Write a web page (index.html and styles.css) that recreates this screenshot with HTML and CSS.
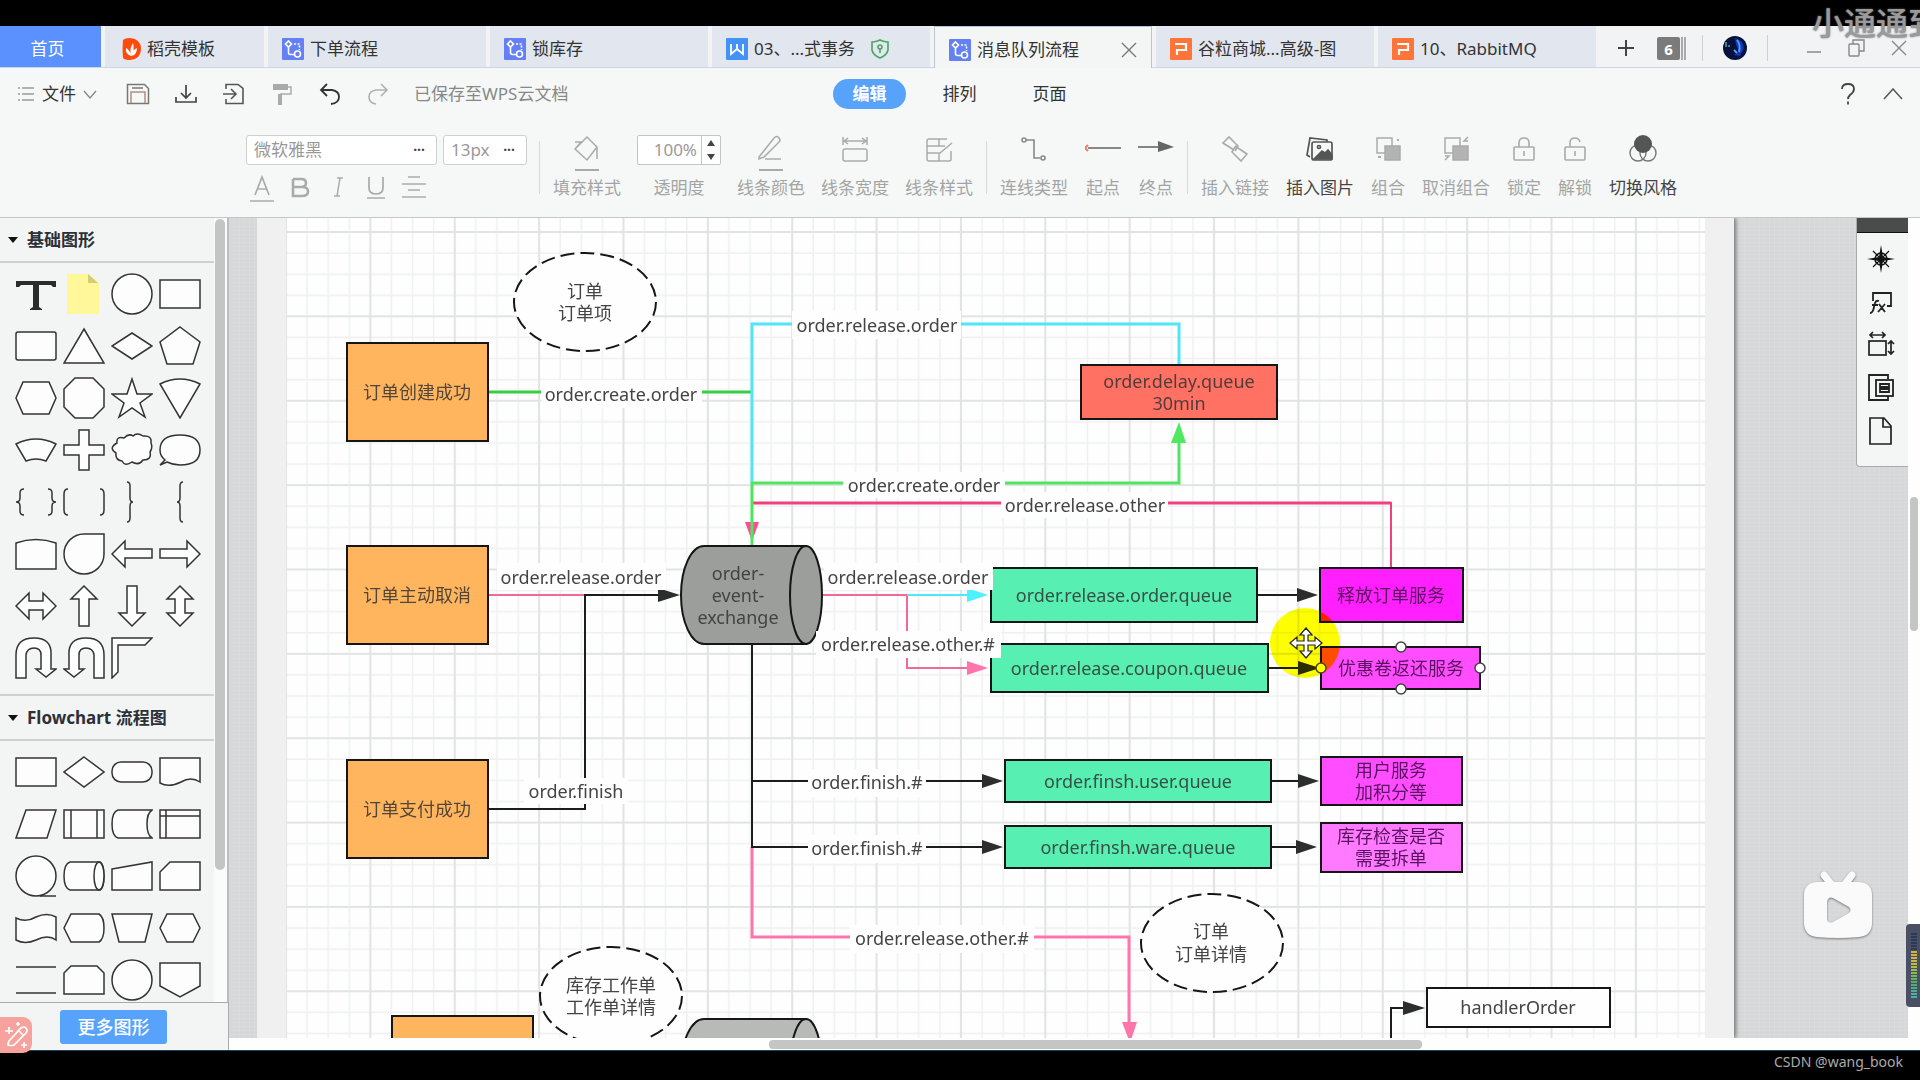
FILE: index.html
```html
<!DOCTYPE html>
<html lang="zh-CN">
<head>
<meta charset="utf-8">
<title>消息队列流程</title>
<link rel="stylesheet" href="styles.css">
</head>
<body>
<svg class="defs" width="0" height="0" aria-hidden="true">
  <defs>
    <symbol id="flow" viewBox="0 0 22 22"><rect width="22" height="22" rx="1" fill="#6580f2"/><g fill="none" stroke="#fff" stroke-width="1.6"><path d="M6.500 3 9.500 6 6.500 9 3.500 6ZM6.500 9v5.500q0 2 2 2h4"/><circle cx="15.500" cy="16" r="3"/><path d="M12 6h5.500v6" stroke-dasharray="2 1.500"/></g></symbol>
    <symbol id="ppt" viewBox="0 0 22 22"><rect width="22" height="22" rx="1" fill="#ff7438"/><path d="M5 6h11v6H7v5" fill="none" stroke="#fff" stroke-width="2.200"/></symbol>
  </defs>
</svg>

<div class="top-band"></div>
<div class="app">
  <nav class="tabs">
    <button class="tab home">首页</button>
    <button class="tab docer"><svg width="19" height="22" viewBox="0 0 19 22"><path d="M1 2q2-2 7-2 11 1 11 11T8 22q-5 0-7-2-1-9 0-18Z" fill="#ff4a0c"/><path d="M9 18q-2-7 2-13 2 7-2 13-6-2-5-8 4 2 5 8 1-6 6-8 0 7-6 8" fill="#fff"/></svg>稻壳模板</button>
    <button class="tab"><svg width="22" height="22"><use href="#flow"/></svg>下单流程</button>
    <button class="tab"><svg width="22" height="22"><use href="#flow"/></svg>锁库存</button>
    <button class="tab"><svg width="22" height="22" viewBox="0 0 22 22"><rect width="22" height="22" rx="1" fill="#4592f7"/><path d="M5 6v10l6-5 6 5V6M11 6v5" fill="none" stroke="#fff" stroke-width="1.800"/></svg>03、...式事务<svg class="shield" width="18" height="20" viewBox="0 0 18 20" fill="none" stroke="#45a85c" stroke-width="1.600"><path d="M9 1q4 2 8 2v8q-1 5-8 8-7-3-8-8V3q4 0 8-2Z"/><circle cx="9" cy="8" r="2"/><path d="M9 10v4"/></svg></button>
    <button class="tab active"><svg width="22" height="22"><use href="#flow"/></svg>消息队列流程<svg class="close" width="16" height="16" viewBox="0 0 16 16"><path d="M1 1 15 15M15 1 1 15" stroke="#777" stroke-width="1.400"/></svg></button>
    <button class="tab"><svg width="22" height="22"><use href="#ppt"/></svg>谷粒商城...高级-图</button>
    <button class="tab"><svg width="22" height="22"><use href="#ppt"/></svg>10、RabbitMQ</button>
    <div class="window-tools">
      <button aria-label="新建"><svg width="18" height="18"><path d="M9 1v16M1 9h16" stroke="#444" stroke-width="2"/></svg></button>
      <span class="stack"><b>6</b><i></i><i></i></span>
      <span class="bar"></span>
      <svg class="avatar" width="24" height="24" viewBox="0 0 24 24"><circle cx="12" cy="12" r="12" fill="#06123c"/><path d="M12 2q8 2 9 10l-4 8-6-1 5-4-3-6Z" fill="#1236b8"/><path d="M14 4q4 5 2 12M11 14l3 3" stroke="#4f9bf5" fill="none" stroke-width="2"/><path d="M3 6v5M5 10h2" stroke="#7cf0cf" stroke-width="1"/></svg>
      <span class="bar"></span>
      <button class="win-min" aria-label="最小化"><svg width="16" height="16"><path d="M1 9h14" stroke="#888" stroke-width="1.500"/></svg></button>
      <button class="win-btn" aria-label="还原"><svg width="18" height="18" fill="none" stroke="#888" stroke-width="1.400"><rect x="1" y="5" width="10" height="12" rx="1"/><path d="M5 5V1h11v11h-5"/></svg></button>
      <button class="win-btn" aria-label="关闭"><svg width="16" height="16"><path d="M1 1 15 15M15 1 1 15" stroke="#888" stroke-width="1.400"/></svg></button>
    </div>
  </nav>

  <header class="header">
    <div class="quick">
      <button class="file"><svg width="18" height="16" stroke="#999" stroke-width="1.400"><path d="M5 2h12M5 8h12M5 14h12M1 2h2M1 8h2M1 14h2"/></svg>文件<svg width="14" height="9" fill="none" stroke="#888" stroke-width="1.300"><path d="M1 1l6 7 6-7"/></svg></button>
      <button class="ic" aria-label="保存"><svg width="24" height="22" fill="none" stroke="#777" stroke-width="1.500"><path d="M1.500 1.500h17l4 4v15h-21Z"/><path d="M5 20V9h14v11" stroke="#b09083"/><path d="M6 5h11"/></svg></button>
      <button class="ic" aria-label="下载"><svg width="22" height="22" fill="none" stroke="#444" stroke-width="1.700"><path d="M11 2v12M6 10l5 5 5-5M1 14v5h20v-5"/></svg></button>
      <button class="ic" aria-label="导出"><svg width="22" height="22" fill="none" stroke="#555" stroke-width="1.600"><path d="M3 6V1.500h12l5 4v15H3V16M0 11h13M8 6l5 5-5 5"/></svg></button>
      <button class="ic" aria-label="格式刷"><svg width="22" height="22" fill="none" stroke="#aaa"><path d="M2 4h15" stroke-width="6"/><path d="M17 4h3v7H9" stroke-width="1.500"/><path d="M9 11v11" stroke-width="4"/></svg></button>
      <button class="ic" aria-label="撤销"><svg width="22" height="22" fill="none" stroke="#333" stroke-width="1.800"><path d="M8 1 2 7l6 6M2 7h11q7 1 7 7t-8 7"/></svg></button>
      <button class="ic" aria-label="重做"><svg width="22" height="22" fill="none" stroke="#b0b0b0" stroke-width="1.600"><path d="M14 1l6 6-6 6M20 7H9q-7 1-7 7t7 7"/></svg></button>
      <span class="saved">已保存至WPS云文档</span>
    </div>
    <div class="modes">
      <button class="mode on">编辑</button>
      <button class="mode">排列</button>
      <button class="mode">页面</button>
    </div>
    <div class="help">
      <button aria-label="帮助"><svg width="16" height="22" fill="none" stroke="#444" stroke-width="1.800"><path d="M2 6q0-5 6-5t6 5q0 3-4 6-2 2-2 4M8 18.500v3"/></svg></button>
      <button aria-label="收起"><svg width="20" height="12" fill="none" stroke="#555" stroke-width="1.500"><path d="M1 11l9-10 9 10"/></svg></button>
    </div>
  </header>

  <div class="ribbon">
    <div class="fonts">
      <div class="row">
        <label class="pick wide"><select aria-label="字体"><option>微软雅黑</option></select><span>···</span></label>
        <label class="pick"><select aria-label="字号"><option>13px</option></select><span>···</span></label>
      </div>
      <div class="row styles">
        <button aria-label="字体颜色"><svg width="24" height="28" fill="none" stroke="#aaa" stroke-width="1.700"><path d="M5 20 12 2l7 18M7.500 14h9M0 26h24"/></svg></button>
        <button aria-label="加粗"><svg width="24" height="28" fill="none" stroke="#aaa" stroke-width="2.600"><path d="M5 4h8q5 0 5 4t-5 4H5V4v17h9q6 0 6-4.500T14 12"/></svg></button>
        <button aria-label="斜体"><svg width="24" height="28" fill="none" stroke="#aaa" stroke-width="1.500"><path d="M11 3h6M8 21h6M14 3l-3 18"/></svg></button>
        <button aria-label="下划线"><svg width="24" height="28" fill="none" stroke="#aaa" stroke-width="1.700"><path d="M5 2v11q0 6 7 6t7-6V2M3 23h18"/></svg></button>
        <button aria-label="对齐"><svg width="24" height="28" fill="none" stroke="#aaa" stroke-width="1.600"><path d="M6 2h12M0 9h24M6 15h12M0 22h24"/></svg></button>
      </div>
    </div>
    <span class="sep"></span>
    <div class="group">
      <button class="tool"><svg width="28" height="36" fill="none" stroke="#aaa" stroke-width="1.500"><path d="M2 14 14 2l10 10-10 13L2 14Zm0 0 6-7M24 12v12M2 7h8"/><path d="M2 35h24" stroke-width="2"/></svg>填充样式</button>
      <div class="tool opacity"><span class="spin"><input id="op" type="text" value="100%"><span><button aria-label="增加"><svg width="10" height="6"><path d="M1 6l4-6 4 6Z" fill="#444"/></svg></button><button aria-label="减少"><svg width="10" height="6"><path d="M1 0l4 6 4-6Z" fill="#444"/></svg></button></span></span><label for="op">透明度</label></div>
      <button class="tool"><svg width="28" height="36" fill="none" stroke="#aaa" stroke-width="1.500"><path d="M2 22 17 3q3-3 5 0t0 4L7 22l-5 2ZM8 24h16"/><path d="M2 35h24" stroke-width="2"/></svg>线条颜色</button>
      <button class="tool"><svg width="28" height="36" fill="none" stroke="#aaa" stroke-width="1.500"><rect x="2" y="14" width="24" height="12" rx="2"/><path d="M2 2v8M26 2v8M3 6h22M7 3 3 6l4 3M21 3l4 3-4 3"/></svg>线条宽度</button>
      <button class="tool"><svg width="28" height="36" fill="none" stroke="#aaa" stroke-width="1.500"><path d="M22 4H4q-2 0-2 2v18q0 2 2 2h20q2 0 2-2v-8M2 11h18M2 18h14M14 4v7M14 19v7M15 18 27 8"/></svg>线条样式</button>
    </div>
    <span class="sep"></span>
    <div class="group lines">
      <button class="tool"><svg width="28" height="36" fill="none" stroke="#888" stroke-width="1.600"><circle cx="4" cy="5" r="2"/><path d="M6 5h8v18h6"/><circle cx="23" cy="23" r="2"/></svg>连线类型</button>
      <button class="tool"><svg width="36" height="36"><path d="M3 13h33" stroke="#888" stroke-width="1.800"/><path d="M3 10 0 13l3 3" fill="none" stroke="#f27a6a" stroke-width="2"/></svg>起点</button>
      <button class="tool"><svg width="36" height="36"><path d="M0 12h22" stroke="#777" stroke-width="1.800"/><path d="M20 6l16 6-16 5Z" fill="#666"/></svg>终点</button>
    </div>
    <span class="sep"></span>
    <div class="group links">
      <button class="tool"><svg width="28" height="36" fill="none" stroke="#aaa" stroke-width="1.600"><path d="M13 15 2 8l6-6 9 9-3 5M14 11l12 8-6 7-9-9 3-5"/></svg>插入链接</button>
      <button class="tool dark"><svg width="30" height="36" fill="none" stroke="#555" stroke-width="1.700"><path d="M5 22 2 20 5 3l17 2v2"/><rect x="7" y="7" width="20" height="18" rx="2"/><path d="M9 24l8-8 3 2 3-3 4 5v4Z" fill="#555"/><circle cx="14" cy="12" r="1.500"/></svg>插入图片</button>
      <button class="tool"><svg width="28" height="36" fill="none" stroke="#aaa" stroke-width="1.500"><path d="M11 18H3V3h15v8"/><rect x="11" y="11" width="15" height="14" fill="#b3b3b3"/><path d="M23 5h2M4 22h3" stroke-width="2"/></svg>组合</button>
      <button class="tool"><svg width="28" height="36" fill="none" stroke="#aaa" stroke-width="1.500"><path d="M11 18H3V3h15v8"/><rect x="11" y="11" width="15" height="14" fill="#b3b3b3"/><path d="M26 2l-4 4h4M3 21h4l-4 4"/></svg>取消组合</button>
      <button class="tool"><svg width="24" height="36" fill="none" stroke="#aaa" stroke-width="1.600"><rect x="2" y="12" width="20" height="13" rx="1"/><path d="M7 12V8q0-5 5-5t5 5v4M12 16v5"/></svg>锁定</button>
      <button class="tool"><svg width="24" height="36" fill="none" stroke="#aaa" stroke-width="1.600"><rect x="2" y="12" width="20" height="13" rx="1"/><path d="M7 12V8q0-5 5-5 4 0 5 4M12 16v5"/></svg>解锁</button>
      <button class="tool dark"><svg width="28" height="36" fill="none" stroke="#777" stroke-width="1.400"><circle cx="9" cy="18" r="8"/><circle cx="19" cy="18" r="8"/><circle cx="14" cy="9" r="9" fill="#555" stroke="none"/></svg>切换风格</button>
    </div>
  </div>

  <main class="work">
    <aside class="side">
      <div class="side-body">
        <div class="lists">
          <h2 class="cat"><svg width="10" height="6"><path d="M0 0h10L5 6Z" fill="#111"/></svg>基础图形</h2>
          <div class="shapes">
            <button><svg><path d="M1 8h40v6h-3l-2-2H24v22l3 2v1H15v-1l3-2V12H6l-2 2H1Z" fill="#2b2b2b" stroke="none"/></svg></button>
            <button><svg><path d="M4 1h22l10 9v31H4Z" fill="#fff799" stroke="none"/><path d="M25 1l10 9H25Z" fill="#d4cd78" stroke="none"/></svg></button>
            <button><svg><circle cx="21" cy="21" r="20"/></svg></button>
            <button><svg><rect x="1" y="7" width="40" height="28"/></svg></button>
            <button><svg><rect x="1" y="7" width="40" height="28" rx="2"/></svg></button>
            <button><svg><path d="M21 4 41 38H1Z"/></svg></button>
            <button><svg><path d="M21 8 41 21 21 34 1 21Z"/></svg></button>
            <button><svg><path d="M21 2 41 17 34 39H8L1 17Z"/></svg></button>
            <button><svg><path d="M8 5h26l7 16-7 16H8L1 21Z"/></svg></button>
            <button><svg><path d="M12 1h18l11 11v18L30 41H12L1 30V12Z"/></svg></button>
            <button><svg><path d="M21 2l5 15h15L29 26l5 14-13-9-13 9 5-14L1 17h15Z"/></svg></button>
            <button><svg><path d="M1 7q20-10 40 0L21 41Z"/></svg></button>
            <button><svg><path d="M1 15q20-10 40 0L31 32q-10-4-20 0Z"/></svg></button>
            <button><svg><path d="M16 1h10v15h15v10H26v15H16V26H1V16h15Z"/></svg></button>
            <button><svg><path d="M6 14Q5 7 13 9q5-5 9-2 4-4 10 0 9-1 8 7 2 5-1 9 2 8-7 8-4 6-11 2-7 5-10-1-7-1-6-8-8-5 1-10Z"/></svg></button>
            <button><svg><path d="M6 31Q1 27 1 21 1 6 21 6t20 15-20 15q-7 0-13-3l-7 3Z"/></svg></button>
            <button><svg><path d="M9 8q-4 0-4 4v5q0 4-4 4 4 0 4 4v5q0 4 4 4M33 8q4 0 4 4v5q0 4 4 4-4 0-4 4v5q0 4-4 4" fill="none"/></svg></button>
            <button><svg><path d="M5 8q-4 0-4 5v16q0 5 4 5M37 8q4 0 4 5v16q0 5-4 5" fill="none"/></svg></button>
            <button><svg><path d="M16 1q3 0 3 4v12q0 4 3 4-3 0-3 4v12q0 4-3 4" fill="none"/></svg></button>
            <button><svg><path d="M24 1q-3 0-3 4v12q0 4-3 4 3 0 3 4v12q0 4 3 4" fill="none"/></svg></button>
            <button><svg><path d="M1 10q20-7 40 0v26H1Z"/></svg></button>
            <button><svg><path d="M41 1v20A20 20 0 1 1 21 1Z"/></svg></button>
            <button><svg><path d="M1 21 14 8v8h27v9H14v9Z"/></svg></button>
            <button><svg><path d="M41 21 28 8v8H1v9h27v9Z"/></svg></button>
            <button><svg><path d="M1 21 14 8v8h14V8l13 13-13 13v-9H14v9Z"/></svg></button>
            <button><svg><path d="M21 1 34 14h-8v27H16V14H8Z"/></svg></button>
            <button><svg><path d="M21 41 34 28h-8V1H16v27H8Z"/></svg></button>
            <button><svg><path d="M21 1 34 14h-8v14h8L21 41 8 28h8V14H8Z"/></svg></button>
            <button><svg><path d="M1 41V18Q1 1 19 1t17 17v14h5l-10 8-10-8h5V18q0-7-7-7t-8 7v23Z"/></svg></button>
            <button><svg><path d="M41 41V18Q41 1 23 1T6 18v14H1l10 8 10-8h-5V18q0-7 7-7t8 7v23Z"/></svg></button>
            <button><svg><path d="M1 1h40l-7 7H7v27l-6 6Z"/></svg></button>
          </div>
          <h2 class="cat ruled"><svg width="10" height="6"><path d="M0 0h10L5 6Z" fill="#111"/></svg>Flowchart 流程图</h2>
          <div class="shapes">
            <button><svg><rect x="1" y="7" width="40" height="28"/></svg></button>
            <button><svg><path d="M21 6 41 21 21 36 1 21Z"/></svg></button>
            <button><svg><rect x="1" y="11" width="40" height="20" rx="9"/></svg></button>
            <button><svg><path d="M1 7h40v24q-9-6-19 0-12 6-21 1Z"/></svg></button>
            <button><svg><path d="M11 7h30l-9 28H1Z"/></svg></button>
            <button><svg><path d="M1 7h40v28H1ZM8 7v28M34 7v28"/></svg></button>
            <button><svg><path d="M41 7H7q-6 2-6 14t6 14h34q-5-3-5-14t5-14Z"/></svg></button>
            <button><svg><path d="M1 7h40v28H1ZM7 7v28M1 13h40"/></svg></button>
            <button><svg><circle cx="21" cy="21" r="20"/><path d="M25 41h16"/></svg></button>
            <button><svg><path d="M7 7h30q4 2 4 14t-4 14H7Q1 33 1 21T7 7Z"/><ellipse cx="36" cy="21" rx="5" ry="14"/></svg></button>
            <button><svg><path d="M1 14 41 7v28H1Z"/></svg></button>
            <button><svg><path d="M11 7h30v28H1V17Z"/></svg></button>
            <button><svg><path d="M1 11q10 5 20-1 11-5 20 0v23q-8-6-20 0-11 5-20 0Z"/></svg></button>
            <button><svg><path d="M8 7h28q5 3 5 14t-5 14H8L1 21Z"/></svg></button>
            <button><svg><path d="M1 7h40l-7 28H8Z"/></svg></button>
            <button><svg><path d="M8 7h26l7 14-7 14H8L1 21Z"/></svg></button>
            <button><svg><path d="M1 8h40M1 34h40"/></svg></button>
            <button><svg><path d="M8 7h26l7 7v21H1V14Z"/></svg></button>
            <button><svg><circle cx="21" cy="21" r="20"/></svg></button>
            <button><svg><path d="M1 4h40v23L21 38 1 27Z"/></svg></button>
          </div>
        </div>
        <div class="side-scroll"><span></span></div>
      </div>
      <div class="side-foot"><button class="more">更多图形</button></div>
    </aside>

    <section class="stage">
      <div class="view">
        <div class="canvas">
          <div class="paper">
            <svg class="diagram" width="100%" height="100%">
              <defs>
                <pattern id="grid" width="80" height="80" patternUnits="userSpaceOnUse" patternTransform="translate(286 232) scale(1.0546)">
                  <path d="M20 0v80M40 0v80M60 0v80M0 20h80M0 40h80M0 60h80" stroke="#eff0f0" stroke-width="1.400"/>
                  <path d="M0 0h80M0 0v80M80 0v80M0 80h80" stroke="#e2e4e3" stroke-width="2"/>
                </pattern>
              </defs>
              <g transform="translate(-257 -218)">
                <rect x="286" y="218" width="1419" height="900" fill="#fdfefd"/>
                <rect x="286" y="218" width="1419" height="900" fill="url(#grid)"/>

                <g class="wire">
                  <path class="bold" d="M489 392H752" stroke="#36cf43"/>
                  <path class="bold" d="M752 483V324H1179V364" stroke="#4fe6f7"/>
                  <path class="bold" d="M752 503H1391" stroke="#f0407f"/>
                  <path d="M1391 502V568" stroke="#f0407f"/>
                  <path d="M745 522h14l-7 19Z" class="head" fill="#ff4a94"/>
                  <path class="bold" d="M752 545V483H1179V442" stroke="#50e560"/>
                  <path d="M1171 443h15l-7-21Z" class="head" fill="#4fe960"/>
                  <path d="M489 595H585M823 595H907V668H968" stroke="#f2689c"/>
                  <path d="M967 661v14l21-7Z" class="head" fill="#ff75ab"/>
                  <path d="M907 595H968" stroke="#4fe6ff"/>
                  <path d="M967 588v14l21-7Z" class="head" fill="#4ff0ff"/>
                  <path class="bold" d="M752 847V937H1129V1023" stroke="#ff75ab"/>
                  <path d="M1122 1022h15l-7 21Z" class="head" fill="#ff75ab"/>
                  <path d="M489 809H585V595H660M752 645V847H983M752 781H983M1258 595H1298M1269 668H1299M1272 781H1299M1272 847H1297M1391 1060V1008H1404"/>
                  <path class="head" d="M658 588v14l22-7ZM982 774v14l21-7ZM982 840v14l21-7ZM1297 588v14l21-7ZM1298 661v14l22-7ZM1298 774v14l21-7ZM1296 840v14l21-7ZM1403 1001v14l22-7Z"/>
                </g>

                <g class="node">
                  <g fill="#ffb55e"><rect x="347" y="343" width="141" height="98"/><rect x="347" y="546" width="141" height="98"/><rect x="347" y="760" width="141" height="98"/><rect x="392" y="1016" width="141" height="98"/></g>
                  <rect x="1081" y="365" width="196" height="54" fill="#ff7263"/>
                  <g fill="#57efb2"><rect x="991" y="568" width="266" height="54"/><rect x="991" y="644" width="277" height="48"/><rect x="1005" y="760" width="266" height="42"/><rect x="1005" y="826" width="266" height="42"/></g>
                  <rect x="1320" y="568" width="143" height="54" fill="#ff1fff"/>
                  <rect x="1321" y="647" width="159" height="42" fill="#ff4dff"/>
                  <rect x="1321" y="757" width="141" height="48" fill="#ff4dff"/>
                  <rect x="1321" y="823" width="141" height="49" fill="#ff7aff"/>
                  <rect x="1427" y="988" width="183" height="39" fill="#fdfefd"/>
                  <g fill="#9c9e9b"><path d="M704 546H806V644H704A23 49 0 0 1 704 546Z"/><ellipse cx="806" cy="595" rx="16" ry="49"/></g>
                  <g fill="#b8bab7"><path d="M704 1019H806V1117H704A23 49 0 0 1 704 1019Z"/><ellipse cx="806" cy="1068" rx="16" ry="49"/></g>
                  <g fill="#fdfefd" stroke-dasharray="14 6"><ellipse cx="585" cy="302" rx="71" ry="49"/><ellipse cx="1212" cy="943" rx="71" ry="49"/><ellipse cx="611" cy="996" rx="71" ry="49"/></g>
                </g>

                <g fill="#fdfefd">
                  <rect x="541" y="380" width="161" height="28"/><rect x="792" y="311" width="169" height="28"/><rect x="843" y="472" width="162" height="26"/><rect x="1001" y="492" width="167" height="26"/>
                  <rect x="497" y="563" width="169" height="27"/><rect x="824" y="563" width="169" height="27"/><rect x="816" y="631" width="185" height="27"/>
                  <rect x="524" y="778" width="104" height="26"/><rect x="808" y="769" width="118" height="28"/><rect x="808" y="835" width="118" height="28"/><rect x="850" y="925" width="184" height="28"/>
                </g>

                <g class="txt">
                  <text x="621" y="401">order.create.order</text>
                  <text x="877" y="332">order.release.order</text>
                  <text x="924" y="492">order.create.order</text>
                  <text x="1085" y="512">order.release.other</text>
                  <text x="581" y="584">order.release.order</text>
                  <text x="908" y="584">order.release.order</text>
                  <text x="908" y="651">order.release.other.#</text>
                  <text x="576" y="798">order.finish</text>
                  <text x="867" y="789">order.finish.#</text>
                  <text x="867" y="855">order.finish.#</text>
                  <text x="942" y="945">order.release.other.#</text>
                  <text x="585" y="298">订单</text><text x="585" y="320">订单项</text>
                  <text x="1211" y="938">订单</text><text x="1211" y="961">订单详情</text>
                  <text x="611" y="992">库存工作单</text><text x="611" y="1014">工作单详情</text>
                  <text x="1518" y="1014">handlerOrder</text>
                </g>
                <g class="txt inbox">
                  <text x="417" y="399">订单创建成功</text>
                  <text x="417" y="602">订单主动取消</text>
                  <text x="417" y="816">订单支付成功</text>
                  <text x="1179" y="388">order.delay.queue</text><text x="1179" y="410">30min</text>
                  <text x="738" y="580">order-</text><text x="738" y="602">event-</text><text x="738" y="624">exchange</text>
                  <text x="1124" y="602">order.release.order.queue</text>
                  <text x="1129" y="675">order.release.coupon.queue</text>
                  <text x="1138" y="788">order.finsh.user.queue</text>
                  <text x="1138" y="854">order.finsh.ware.queue</text>
                </g>
                <g class="txt purple">
                  <text x="1391" y="602">释放订单服务</text>
                  <text x="1401" y="675">优惠卷返还服务</text>
                  <text x="1391" y="777">用户服务</text><text x="1391" y="799">加积分等</text>
                  <text x="1391" y="843">库存检查是否</text><text x="1391" y="865">需要拆单</text>
                </g>

                <g fill="#fff" stroke="#444" stroke-width="1.500"><circle cx="1401" cy="647" r="5"/><circle cx="1401" cy="689" r="5"/><circle cx="1321" cy="668" r="5"/><circle cx="1480" cy="668" r="5"/></g>
                <circle class="glow" cx="1305" cy="643" r="35"/>
                <path d="M1306 628l6 7h-4v6h7v-4l7 6-7 6v-4h-7v6h4l-6 7-6-7h4v-6h-7v4l-7-6 7-6v4h7v-6h-4Z" fill="#fff" stroke="#222" stroke-width="1.200"/>
              </g>
            </svg>
          </div>
          <div class="tools-panel">
            <div class="grip"></div>
            <button aria-label="导航"><svg width="28" height="28" viewBox="-14 -14 28 28"><path d="M0-14 2-2 14 0 2 2 0 14-2 2-14 0-2-2Z" fill="#111"/><circle r="6" fill="none" stroke="#111" stroke-width="1.500"/><path d="M-8-8 8 8M8-8-8 8" stroke="#111" stroke-width="1.200"/></svg></button>
            <button aria-label="公式"><svg width="26" height="26" fill="none" stroke="#222" stroke-width="1.800"><path d="M5 12V4h18v13h-4"/><path d="M2 24q3 0 4-6l1-4q1-3 4-2M4 16h6M11 15l6 8M17 15l-7 8"/></svg></button>
            <button aria-label="尺寸"><svg width="28" height="28" fill="none" stroke="#222" stroke-width="1.700"><rect x="2" y="10" width="17" height="14"/><path d="M3 4h15M6 1 3 4l3 3M15 1l3 3-3 3M24 10v13M21 13l3-3 3 3M21 20l3 3 3-3"/></svg></button>
            <button aria-label="图层"><svg width="28" height="28" fill="none" stroke="#222" stroke-width="1.800"><path d="M21 5V1H2v25h19v-4"/><rect x="9" y="6" width="17" height="16"/><path d="M13 10h9v3h-9ZM13 15h9v3h-9Z"/></svg></button>
            <button aria-label="页面"><svg width="24" height="28" fill="none" stroke="#222" stroke-width="1.700"><path d="M1 1h14l7 8v18H1ZM14 1v9h8"/></svg></button>
          </div>
        </div>
        <div class="v-scroll"><span></span></div>
      </div>
      <div class="h-scroll"><span></span></div>
    </section>
  </main>
</div>
<footer class="credit">CSDN @wang_book</footer>

<div class="mark">小通通到</div>
<button class="magic" aria-label="画笔"><svg width="24" height="26" fill="none" stroke="#fff" stroke-width="1.700"><path d="M5 19 17 6q3-2 5 0 2 3 0 5L10 23q-3 1-6 0 0-2 1-4ZM15 9l4 4M5 5v7M1 9h8M14 0v4M12 2h4M20 20v6M17 23h6"/></svg></button>
<svg class="tv" width="72" height="72" viewBox="0 0 72 72"><path d="M22 5l7 9M50 5l-7 9" stroke="#fafafa" stroke-width="7" stroke-linecap="round"/><path fill-rule="evenodd" d="M16 12H56Q69 12 70 24V54Q69 66 57 67 36 69 15 67 3 66 2 54V24Q3 12 16 12ZM25 32V49Q26 54 31 52L47 43Q50 40 47 37L31 28Q26 26 25 32Z" fill="#fafafa"/></svg>
<div class="meter"><span></span></div>
</body>
</html>
```
FILE: styles.css
```css
* { box-sizing: border-box; }

body {
  margin: 0;
  height: 100vh;
  display: flex;
  flex-direction: column;
  position: relative;
  overflow: hidden;
  background: #000;
  color: #333;
  font: 17px/24px "Noto Sans", "Noto Sans CJK SC", sans-serif;
}

button {
  border: 0;
  padding: 0;
  background: none;
  color: inherit;
  font: inherit;
  white-space: nowrap;
}

svg { display: block; flex: none; }
.defs { position: absolute; }

.top-band { flex: none; height: 26px; }

.app {
  flex: 1;
  min-height: 0;
  display: flex;
  flex-direction: column;
  background: #f6f8f7;
  border-bottom: 1px solid #16405c;
}

/* document tabs */
.tabs {
  flex: none;
  display: flex;
  gap: 4px;
  height: 42px;
  background: #f1f3f5;
  border-bottom: 1px solid #ccd5e0;
}
.tab {
  flex: 0 1 218px;
  display: flex;
  align-items: center;
  gap: 6px;
  padding: 5px 14px 0;
  background: #e1e6ef;
}
.home { flex-basis: 101px; justify-content: center; padding: 5px 6px 0 0; background: #5b91ff; color: #fff; }
.docer { flex-basis: 159px; padding-left: 17px; }
.active {
  height: 42px;
  padding-top: 4px;
  background: #f4f6f5;
  border: 1px solid #b9c6da;
  border-bottom: 0;
}
.shield { margin-left: 10px; }
.close { margin-left: auto; }

.window-tools {
  flex: 1;
  display: flex;
  align-items: center;
  padding: 3px 0 0 17px;
}
.stack { display: flex; gap: 1px; height: 23px; margin: 0 16px 0 22px; }
.stack b {
  width: 23px;
  border-radius: 2px;
  background: #7b7b7b;
  color: #fff;
  text-align: center;
  font-size: 15px;
}
.stack i { width: 2px; background: #aaa; }
.bar { width: 1px; height: 26px; background: #ccd0d4; }
.avatar { margin: 0 20px; }
.win-min { margin: 6px 0 0 38px; }
.win-btn { margin-left: 25px; }
.win-btn:nth-last-child(2) { margin-left: 26px; }

/* file row */
.header {
  flex: none;
  display: flex;
  align-items: center;
  height: 50px;
  padding: 2px 17px 0;
}
.quick { display: flex; align-items: center; gap: 24px; width: 816px; }
.file { display: flex; align-items: center; gap: 7px; margin-right: 5px; }
.ic { width: 24px; display: flex; justify-content: center; }
.saved { color: #888; }
.modes { display: flex; gap: 17px; }
.mode { width: 73px; height: 30px; border-radius: 15px; }
.mode.on { background: #57a3fb; color: #fff; font-weight: 700; }
.help { margin-left: auto; display: flex; align-items: center; gap: 27px; }

/* ribbon */
.ribbon {
  flex: none;
  display: flex;
  height: 100px;
  padding: 17px 0 0 246px;
  border-bottom: 1px solid #c4c7c5;
  color: #a3a5a4;
}
.fonts { width: 281px; }
.row { display: flex; gap: 6px; }
.pick {
  display: flex;
  align-items: center;
  width: 84px;
  height: 30px;
  padding: 0 11px 0 7px;
  border: 1px solid #cdd0ce;
  border-radius: 3px;
  background: #fff;
}
.pick.wide { width: 191px; }
.pick select {
  flex: 1;
  min-width: 0;
  padding: 0;
  appearance: none;
  border: 0;
  background: none;
  color: #999;
  font: inherit;
}
.pick span { color: #444; font-weight: 700; font-size: 14px; line-height: 16px; }
.styles { gap: 14px; padding: 10px 4px 0; }
.sep { width: 1px; height: 53px; margin: 6px 13px 0 12px; background: #d6d9d7; }
.group { display: flex; gap: 16px; }
.group + .sep { margin-left: 13px; }
.lines { gap: 17px; }
.links { gap: 17px; }
.lines .tool:not(:first-child) { width: 36px; }
.tool {
  display: flex;
  flex-direction: column;
  align-items: center;
  gap: 5px;
  height: 65px;
}
.dark { color: #444; }
.opacity { gap: 11px; width: 84px; }
.spin {
  display: flex;
  width: 84px;
  height: 30px;
  border: 1px solid #c3c5c4;
  border-radius: 2px;
  background: #fff;
}
.spin input {
  flex: 1;
  min-width: 0;
  border: 0;
  padding: 0 4px 0 0;
  background: none;
  color: #999;
  font: inherit;
  text-align: right;
}
.spin > span { display: flex; flex-direction: column; width: 19px; border-left: 1px solid #c3c5c4; }
.spin button { height: 14px; display: flex; align-items: center; justify-content: center; }

/* shape library */
.work { flex: 1; min-height: 0; display: flex; }
.side {
  flex: none;
  width: 229px;
  display: flex;
  flex-direction: column;
  background: #f3f5f4;
}
.side-body { flex: 1; min-height: 0; display: flex; border-right: 2px solid #bbbdbc; }
.lists { flex: none; width: 214px; overflow: hidden; }
.cat {
  display: flex;
  align-items: center;
  gap: 9px;
  height: 45px;
  margin: 0;
  padding-left: 8px;
  border-bottom: 2px solid #cfd1d0;
  font-size: 17px;
  font-weight: 700;
  color: #2c3038;
}
.ruled { height: 47px; border-top: 2px solid #cfd1d0; }
.shapes {
  display: grid;
  grid-template-columns: repeat(4, 48px);
  grid-auto-rows: 52px;
  padding: 5px 0 10px 12px;
}
.shapes button { display: flex; align-items: center; justify-content: center; }
.shapes svg { width: 42px; height: 42px; fill: #fcfdfc; stroke: #333; stroke-width: 1.5; }
.side-scroll { flex: 1; background: #fafbfa; }
.side-scroll span {
  display: block;
  width: 10px;
  height: 83%;
  margin: 1px 0 0 1px;
  border-radius: 5px;
  background: #c3c5c4;
}
.side-foot {
  flex: none;
  height: 48px;
  padding: 7px 60px;
  border-top: 1px solid #a9abaa;
  border-right: 1px solid #a9abaa;
}
.more {
  width: 107px;
  height: 34px;
  border-radius: 3px;
  background: #57a3fb;
  color: #fff;
  font-size: 18px;
  font-weight: 500;
}

/* drawing area */
.stage { flex: 1; min-width: 0; display: flex; flex-direction: column; background: #fdfefd; }
.view { flex: 1; min-height: 0; display: flex; }
.canvas {
  flex: 1;
  min-width: 0;
  display: flex;
  padding-left: 28px;
  background:
    repeating-linear-gradient(90deg, rgba(255, 255, 255, .08) 0 1px, transparent 1px 5px),
    repeating-linear-gradient(rgba(255, 255, 255, .08) 0 1px, transparent 1px 4px),
    #d6d7d9;
}
.paper {
  flex: 1;
  min-width: 0;
  margin-right: 122px;
  background: #eff0ef;
  box-shadow: 2px 0 4px #777;
  clip-path: inset(0 -8px 0 0);
}
.diagram text { font-family: "Noto Sans", "Noto Sans CJK SC", sans-serif; font-size: 18px; text-anchor: middle; }
.txt { fill: #444; }
.inbox { fill: #333; fill-opacity: .85; }
.purple { fill: #5a1360; }
.wire { fill: none; stroke: #1c1c1c; stroke-width: 2; }
.wire .bold { stroke-width: 3; }
.wire .head { stroke: none; }
.wire .head:not([fill]) { fill: #2c2e2d; }
.node { stroke: #161616; stroke-width: 2; }
.glow { fill: #ff0; mix-blend-mode: multiply; }

.tools-panel {
  flex: none;
  width: 52px;
  height: 249px;
  display: flex;
  flex-direction: column;
  padding-right: 3px;
  background: #f4f6f5;
  border-left: 1px solid #aaa;
  border-bottom: 1px solid #aaa;
  border-radius: 0 0 0 4px;
}
.tools-panel button { height: 43px; display: flex; align-items: center; justify-content: center; }
.grip { height: 15px; margin: 0 -3px 4px 0; background: #4a4c4b; border-bottom: 1px solid #111; }
.v-scroll { flex: none; width: 12px; padding: 279px 2px 0; }
.v-scroll span { display: block; height: 134px; border-radius: 4px; background: #c4c6c5; }
.h-scroll { flex: none; height: 12px; padding: 2px 0 0 540px; }
.h-scroll span { display: block; width: 653px; max-width: 100%; height: 9px; border-radius: 4px; background: #c4c6c5; }

.credit {
  flex: none;
  height: 29px;
  padding-right: 17px;
  color: #aaa;
  font-size: 14px;
  line-height: 22px;
  text-align: right;
}

/* overlays */
.mark {
  position: absolute;
  left: calc(100% - 108px);
  top: 0;
  color: #9a9a9a;
  font-size: 32px;
  font-weight: 500;
  line-height: 46px;
  white-space: nowrap;
  text-shadow: 0 0 2px #666;
}
.magic {
  position: absolute;
  left: 0;
  bottom: 27px;
  width: 32px;
  height: 36px;
  border-radius: 0 9px 9px 0;
  background: #f7a29d;
  display: flex;
  align-items: center;
  justify-content: center;
}
.tv { position: absolute; right: 46px; bottom: 138px; filter: drop-shadow(0 1px 1px #777); }
.meter {
  position: absolute;
  right: 0;
  bottom: 73px;
  width: 14px;
  height: 83px;
  padding: 9px 3px 8px 5px;
  border-radius: 4px 0 0 4px;
  background: #4a4f63;
}
.meter span {
  display: block;
  height: 100%;
  background:
    repeating-linear-gradient(transparent 0 2px, #4a4f63 2px 3px),
    linear-gradient(#2b3a58 0 25%, #e2ad33 26%, #b8bf4a 50%, #4fae6a 75%, #3fb5ae);
}
```
